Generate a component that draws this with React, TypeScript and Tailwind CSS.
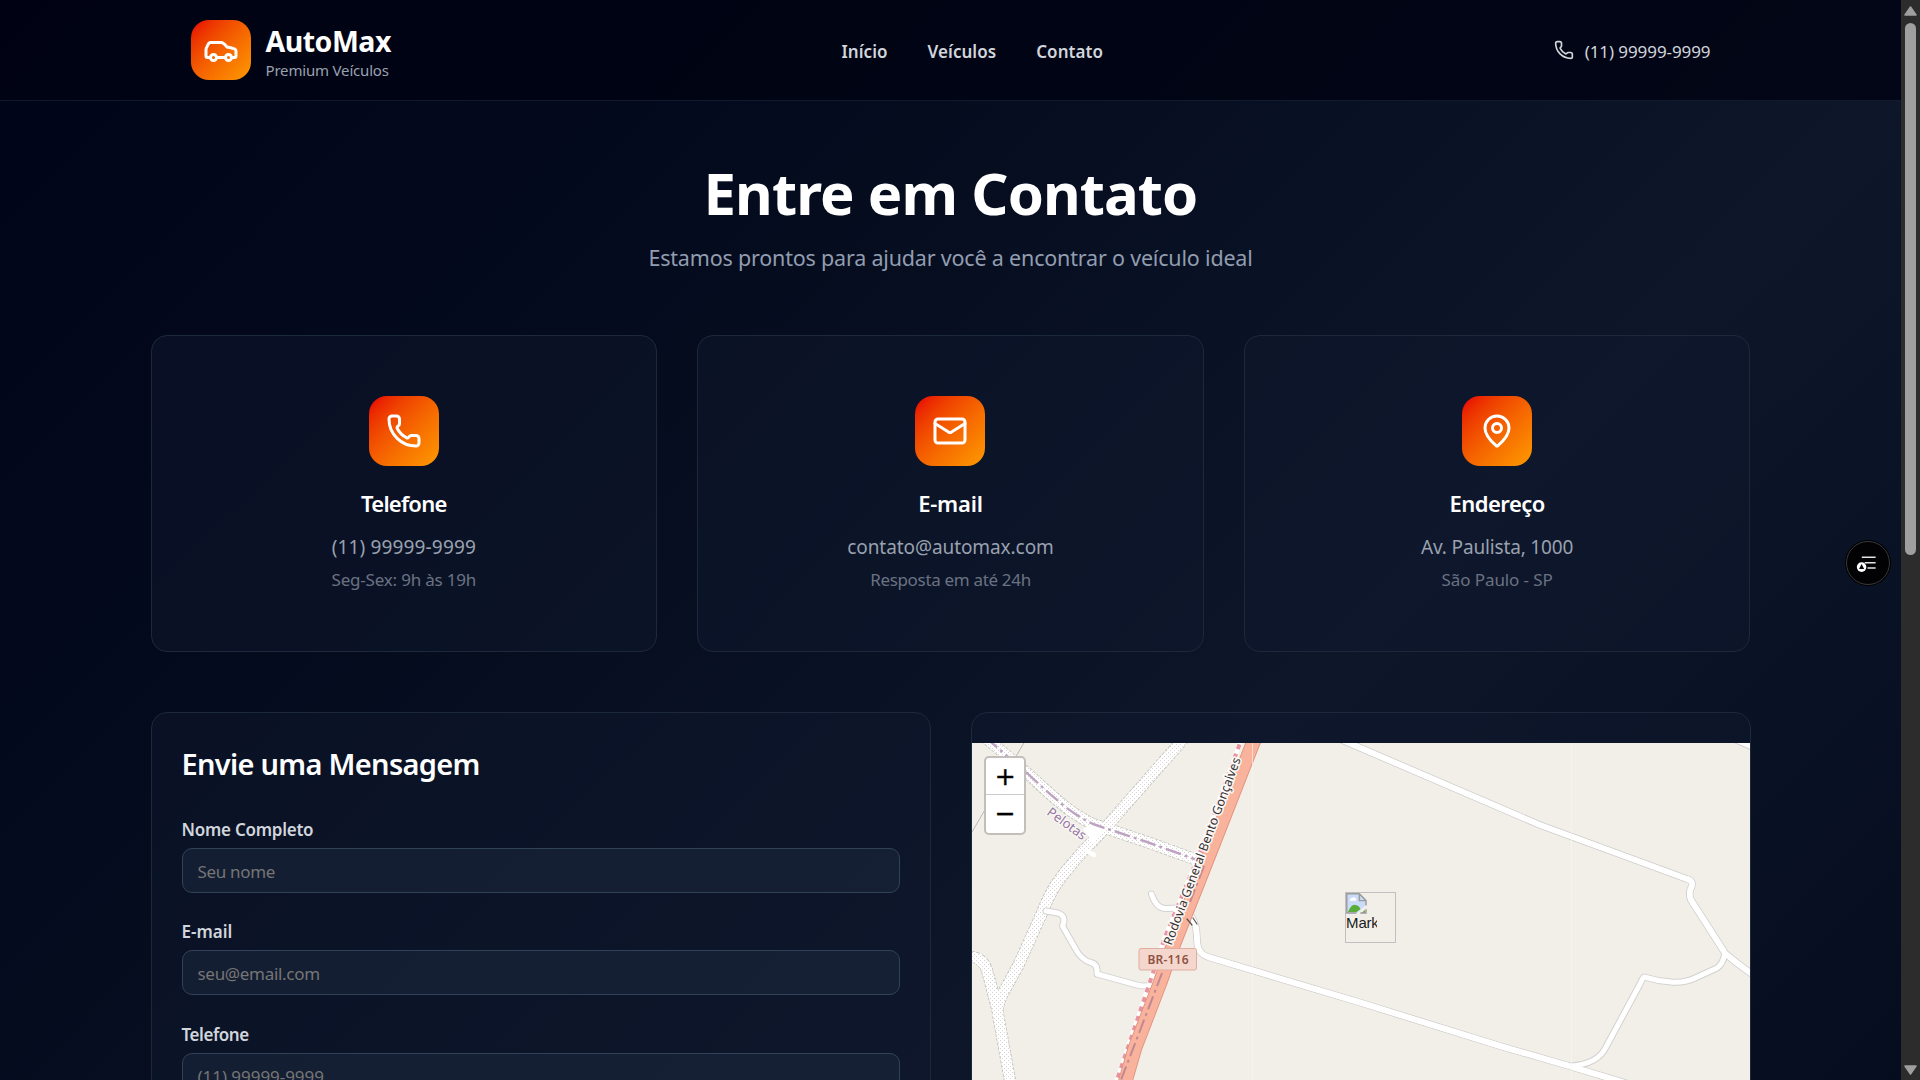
import type { ReactNode } from "react";
import { Car, Mail, MapPin, Phone } from "lucide-react";

const roadE =
  "M1191.5 917 Q1196 924 1196.5 932 L1197.5 945 Q1199 954 1208 957 L1360 1002.5 L1500 1046 L1569 1066 L1632 1085";
const roadF =
  "M1330 735 L1342 740 L1540 825 L1687 879 Q1694 881 1691.5 887 Q1688 893 1691 900 L1725 953 Q1731 959 1752 974";
const roadG =
  "M1725 953 Q1723 964 1717 968 L1694 978.5 Q1684 983 1671 982 Q1657 981 1644 977 Q1642 979 1640 984 L1606 1047 Q1598 1064 1571 1066";
const roadD =
  "M1046 911 L1058 913 Q1067 916 1062.5 926 L1075 948 Q1081 960 1091 962.5 Q1098 964 1097 974 L1137 985 Q1144 987 1152 985";
const culDeSac = "M1151.5 894 Q1156 908 1165 908.5 L1184 908";
const gravelMain =
  "M1186 735 L1180 743 Q1140 788 1108 825 L1092 842 Q1072 862 1057 883 Q1048 897 1042 913 L1018 966 L1002 995 Q997 1006 998 1014 L1011 1086";
const gravelLeft = "M966 957 L973 957 Q983 959 987 970 L998 1012";
const gravelCross =
  "M985 737 L1027 773 Q1045 790 1063 805 Q1078 817 1093 824 L1147 842 L1197 860";
const highway = "M1257 735 L1253 743 L1213 845 L1171.5 950 L1160 983 L1135 1048 L1124 1086";
const cycleway = "M1243 735 L1240 743 L1203 845 L1165 937 L1153 973 L1115 1086";

function Track({ d, w = 5.5 }: { d: string; w?: number }) {
  return (
    <>
      <path d={d} stroke="#d3d2d0" strokeWidth={w + 2} />
      <path d={d} stroke="#ffffff" strokeWidth={w} />
    </>
  );
}

function MapCanvas() {
  const gravel = [gravelMain, gravelLeft, gravelCross];
  return (
    <svg viewBox="972 743 778 337" className="block h-[337px] w-[778px] bg-[#f2efe9]" fill="none" strokeLinejoin="round" strokeLinecap="round">
      <defs>
        <pattern id="gravel" width="4" height="4" patternUnits="userSpaceOnUse">
          <rect width="4" height="4" fill="#ffffff" />
          <rect x="0" y="0" width="1" height="1" fill="#d6d5d3" />
          <rect x="2" y="2" width="1" height="1" fill="#d6d5d3" />
        </pattern>
      </defs>
      <path d="M1025 741 L972 832" stroke="#b9b8b4" strokeWidth="1" />
      {gravel.map((d) => (
        <path key={d} d={d} stroke="#bdbcb9" strokeWidth="12" strokeDasharray="3 1.5" strokeLinecap="butt" />
      ))}
      {gravel.map((d) => (
        <path key={d} d={d} stroke="url(#gravel)" strokeWidth="10.5" />
      ))}
      <path d="M1084 829 L1093 824 L1103 829 L1094 842 Z" fill="#fff" stroke="#fff" strokeWidth="2" />
      <path d="M1088 851.5 L1094 855" stroke="#fff" strokeWidth="4.5" />
      <Track d={roadE} />
      <Track d={roadF} />
      <Track d={roadG} w={5} />
      <path d={roadF} stroke="#fff" strokeWidth="5.5" />
      <path d={roadE} stroke="#fff" strokeWidth="5.5" />
      <Track d={roadD} w={5} />
      <Track d={culDeSac} w={5} />
      <path d="M1736 740 L1752 747" stroke="#d3d2d0" strokeWidth="7" />
      <path d="M1736 740 L1752 747" stroke="#fff" strokeWidth="5" />
      <path d={gravelCross} stroke="#bda2c1" strokeWidth="2.4" strokeDasharray="16 4 3 4" strokeLinecap="butt" />
      <path d={cycleway} stroke="#fff" strokeWidth="4.5" strokeLinecap="butt" />
      <path d={cycleway} stroke="#e8939f" strokeWidth="4" strokeDasharray="5 5" strokeLinecap="butt" />
      <path d={highway} stroke="#e0907b" strokeWidth="14.5" />
      <path d={highway} stroke="#f9b29c" strokeWidth="12.8" />
      <path d="M1204 866 L1190 902 M1162 973 L1141 1028 L1119 1085" stroke="#c08892" strokeWidth="2" strokeDasharray="14 4 3 4" strokeLinecap="butt" />
      <path d="M1187 919 L1192 925 M1193 918 L1197 924" stroke="#55534f" strokeWidth="1.2" />
      <path d="M1252.5 743 V1080 M1571.5 743 V1080" stroke="#f8f6f2" strokeWidth="1" strokeOpacity="0.6" />
      <text
        transform="translate(1171.5 946) rotate(-69.6)"
        textLength="199"
        className="font-['Noto_Sans'] text-[12.5px]"
        fill="#333333"
        stroke="#ffffffdd"
        strokeWidth="3.4"
        paintOrder="stroke"
      >
        Rodovia General Bento Gonçalves
      </text>
      <text
        transform="translate(1046 814) rotate(36)"
        textLength="45"
        className="font-['Noto_Sans'] text-[13px]"
        fill="#9674a0"
        stroke="#ffffffaa"
        strokeWidth="2"
        paintOrder="stroke"
      >
        Pelotas
      </text>
      <rect x="1139" y="948.5" width="57.5" height="21.5" rx="2" fill="#f5d6cc" stroke="#dfae9f" />
      <text x="1168" y="963.5" textAnchor="middle" textLength="41" className="font-['Noto_Sans'] text-[12px] font-semibold" fill="#8f5244">
        BR-116
      </text>
    </svg>
  );
}

function BrokenImage() {
  return (
    <svg viewBox="0 0 22 22" className="block size-[21px]">
      <path d="M1 1 H14 L21 8 V12 L17 16 L13 20 L11 21 H1 Z" fill="#c9dbf8" />
      <path d="M4 8 Q4 5 7 5 Q9 3 10.500 6 Q12 7 10 8 Z" fill="#fff" />
      <path d="M2 20 Q6 11 10 12.500 Q14 13 15 17 L11 20 Z" fill="#5aad3b" />
      <path d="M17 20.500 L20 17.500 V21 H16" fill="#5aad3b" />
      <path d="M11 21 H0.800 V0.800 H14 L21 8 V13 M14 1 V8 H21 M15 21 H21 V17" fill="none" stroke="#9b9b9b" strokeWidth="1.5" />
    </svg>
  );
}

function InfoCard({ icon, title, line, note }: { icon: ReactNode; title: ReactNode; line: ReactNode; note: ReactNode }) {
  return (
    <div className="flex h-[317px] flex-col items-center rounded-2xl border border-[#1c293b] bg-[#0f172e]/50 pt-15">
      <div className="flex size-[70px] items-center justify-center rounded-[18px] bg-linear-to-br from-red-600 to-amber-500 text-white">{icon}</div>
      <h3 className="mt-[21px] text-[22px] leading-8 font-semibold text-white">{title}</h3>
      <p className="mt-[13px] text-[19px] leading-[30px] text-gray-400">{line}</p>
      <p className="mt-1 text-[17px] leading-7 text-gray-500">{note}</p>
    </div>
  );
}

function Field({ label, placeholder }: { label: ReactNode; placeholder: ReactNode }) {
  return (
    <div className="mb-[27.5px]">
      <div className="text-[17px] leading-6 font-semibold text-gray-300">{label}</div>
      <div className="mt-[6px] flex h-[45px] items-center rounded-[10px] border border-slate-700 bg-slate-800/50 px-[15px] pt-[3px] text-[17px] text-[#757575]">
        {placeholder}
      </div>
    </div>
  );
}

export default function App() {
  return (
    <div className="flex h-[1080px] w-[1920px] overflow-hidden bg-[#020617] font-['Noto_Sans',sans-serif] whitespace-nowrap">
      <div className="relative h-[2095px] w-[1901px] shrink-0 bg-[linear-gradient(135deg_in_oklab,#010419_0%,#050c1e_26%,#0e162a_50%,#050c1e_76%,#020617_100%)]">
        <header className="h-[101px] border-b border-slate-800/60 bg-[#000312]/80">
          <div className="mx-auto flex h-[100px] w-[1600px] items-center px-10">
            <div className="flex w-[651px] gap-[15px]">
              <div className="flex size-15 items-center justify-center rounded-[18px] bg-linear-to-br from-red-600 to-amber-500">
                <Car size={36} className="text-white" />
              </div>
              <div className="flex flex-col gap-[3px] pt-[5px]">
                <span className="text-[28.5px] leading-8 font-bold tracking-[-0.5px] text-white">AutoMax</span>
                <span className="text-[15px] leading-5 tracking-[-0.18px] text-gray-400">Premium Veículos</span>
              </div>
            </div>
            <nav className="flex grow gap-10 pt-[3px] text-[17px] font-semibold tracking-[0.05px] text-gray-300">
              <span>Início</span>
              <span>Veículos</span>
              <span>Contato</span>
            </nav>
            <div className="flex items-center gap-[11px] text-gray-300">
              <Phone size={20} />
              <span className="pt-[3px] text-[17px] tracking-[-0.08px]">(11) 99999-9999</span>
            </div>
          </div>
        </header>

        <main className="mx-auto w-[1600px] pt-[52px]">
          <h1 className="text-center text-[58px] leading-[80px] font-bold tracking-[-0.92px] text-white">Entre em Contato</h1>
          <p className="mt-[9px] text-center text-[21.5px] leading-8 tracking-[-0.19px] text-[#929db0]">
            Estamos prontos para ajudar você a encontrar o veículo ideal
          </p>

          <section className="mt-[61px] grid grid-cols-3 gap-10">
            <InfoCard
              icon={<Phone size={36} />}
              title={<span className="tracking-[-0.76px]">Telefone</span>}
              line={<span className="tracking-[0.147px]">(11) 99999-9999</span>}
              note={<span className="tracking-[-0.194px]">Seg-Sex: 9h às 19h</span>}
            />
            <InfoCard
              icon={<Mail size={36} />}
              title={<span className="tracking-[-0.2px]">E-mail</span>}
              line={<span className="tracking-[-0.08px]">contato@automax.com</span>}
              note={<span className="tracking-[-0.323px]">Resposta em até 24h</span>}
            />
            <InfoCard
              icon={<MapPin size={36} />}
              title={<span className="tracking-[-0.5px]">Endereço</span>}
              line={<span className="tracking-[-0.154px]">Av. Paulista, 1000</span>}
              note={<span className="tracking-[-0.102px]">São Paulo - SP</span>}
            />
          </section>

          <section className="mt-15 grid grid-cols-2 gap-10">
            <div className="h-[800px] rounded-2xl border border-[#1c293b] bg-[#0f172e]/50 px-[30px] pt-[31px]">
              <h2 className="mb-[33.5px] text-[29px] leading-10 font-semibold tracking-[-0.7px] text-white">Envie uma Mensagem</h2>
              <Field label={<span className="tracking-[-0.25px]">Nome Completo</span>} placeholder={<span className="tracking-[-0.319px]">Seu nome</span>} />
              <Field label={<span>E-mail</span>} placeholder={<span className="tracking-[-0.301px]">seu@email.com</span>} />
              <Field label={<span className="tracking-[-0.447px]">Telefone</span>} placeholder={<span className="tracking-[-0.045px]">(11) 99999-9999</span>} />
            </div>
            <div className="h-[800px] overflow-hidden rounded-2xl border border-[#1c293b] bg-[#0f172e]/50 pt-[30px]">
              <div className="relative">
                <MapCanvas />
                <div className="absolute top-[12.5px] left-[12.5px] w-[41.5px] overflow-hidden rounded-[5px] border-2 border-[#c2bfba] bg-white font-['DejaVu_Sans',sans-serif] text-[25px] text-black [-webkit-text-stroke:0.4px_black]">
                  <div className="flex h-[37.5px] items-center justify-center border-b border-[#ccc] pt-px pl-px">
                    <span className="leading-none">+</span>
                  </div>
                  <div className="flex h-[37.5px] items-center justify-center pl-px">
                    <span className="leading-none">−</span>
                  </div>
                </div>
                <div className="absolute top-[149px] left-[373.6px] size-[51px] border border-[#c0c0c0]">
                  <BrokenImage />
                  <div className="w-[31px] overflow-hidden font-['Liberation_Sans',sans-serif] text-[15px] leading-[18px] tracking-[-0.2px] text-[#1a1a1a]">Mark</div>
                </div>
              </div>
            </div>
          </section>
        </main>

        <div className="absolute top-[541px] left-[1846px] size-[44px] rounded-full border border-[#3a3a3a] bg-[#020204] shadow-[0_0_0_1px_#000]">
          <svg viewBox="1846 541 44 44" className="block size-full">
            <path d="M1861.500 557 H1876 M1864.500 562.700 H1876 M1867.500 568.300 H1876" stroke="#e2e2e2" strokeWidth="1.7" />
            <circle cx="1861.300" cy="567.300" r="5" fill="#fff" />
            <path d="M1861.300 564 L1864 569.300 H1858.600 Z" fill="#050505" />
          </svg>
        </div>
      </div>

      <div className="flex h-[1080px] w-[19px] flex-col items-center bg-[#2c2c2c]">
        <svg viewBox="0 0 13 10" className="mt-[6px] h-[10px] w-[13px] shrink-0">
          <path d="M6.500 1 L12 9 H1 Z" fill="#9f9f9f" stroke="#9f9f9f" strokeWidth="1.500" strokeLinejoin="round" />
        </svg>
        <div className="mt-[7px] h-[532px] w-[11px] rounded-full bg-[#9f9f9f]" />
        <svg viewBox="0 0 13 10" className="mt-auto mb-[5px] h-[10px] w-[13px] shrink-0">
          <path d="M6.500 9 L12 1 H1 Z" fill="#9f9f9f" stroke="#9f9f9f" strokeWidth="1.500" strokeLinejoin="round" />
        </svg>
      </div>
    </div>
  );
}
